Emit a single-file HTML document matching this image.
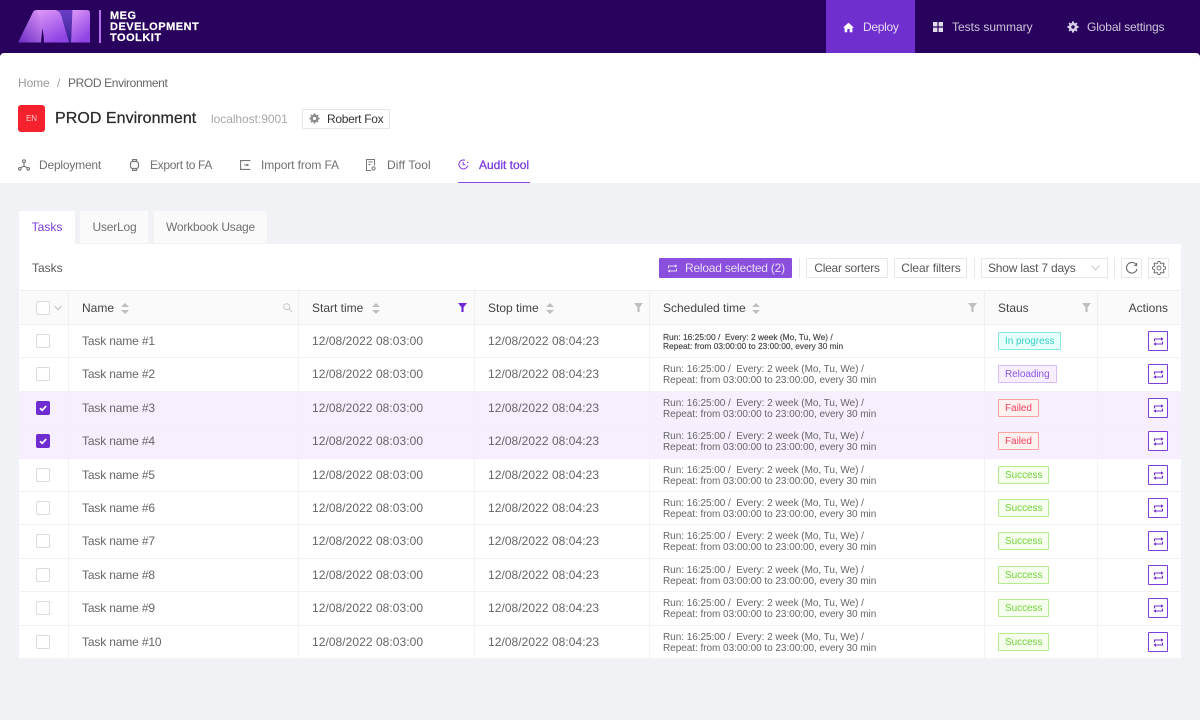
<!DOCTYPE html>
<html lang="en"><head><meta charset="utf-8"><title>MEG Development Toolkit</title>
<style>
*{box-sizing:border-box}
html,body{margin:0;padding:0}
body{width:1200px;height:720px;overflow:hidden;background:#f0f2f5;font-family:"Liberation Sans",sans-serif;position:relative;color:#595959;font-size:12px}
.a{position:absolute;white-space:nowrap}
svg{display:block}
.hdr{left:0;top:0;width:1200px;height:60px;background:#28025c}
.white{left:0;top:53px;width:1200px;height:130px;background:#fff;border-radius:4px 4px 0 0}
.nav{top:20px;font-size:12px;line-height:14px;color:#cfc6dc}
.btn{top:258px;height:20px;background:#fff;border:1px solid #e8e8e8;border-radius:1px;font-size:12px;line-height:18px;color:#595959;text-align:center}
.sep{top:258px;width:1px;height:20px;background:#e8e8e8}
table{position:absolute;left:19px;top:290px;width:1162px;border-collapse:collapse;table-layout:fixed;background:#fff;font-size:12px;color:#666}
th{height:34px;background:#fafafa;font-weight:400;text-align:left;color:#444;padding:0 0 0 13.5px;border-right:1px solid #f0f0f0;border-bottom:1px solid #f0f0f0;border-top:1px solid #f0f0f0;position:relative}
td{height:33px;padding:0 0 0 13.5px;border-right:1px solid #f2f2f2;border-bottom:1px solid #f2f2f2;white-space:nowrap;position:relative;letter-spacing:.05px}
tr.t td{height:34px;padding-bottom:1px}
td.n{letter-spacing:-.15px}
th:last-child,td:last-child{border-right:0}
tr.s td{background:#f7effe;border-color:#f5edfc}
.cb{display:block;width:14px;height:14px;margin-left:17px;border:1px solid #dcdcdc;border-radius:2px;background:#fff}
.cb.on{background:#6f2dd1;border-color:#6f2dd1}
.sch{font-size:10px;line-height:11.5px;color:#666;letter-spacing:-.04px;position:relative;top:1px}
.sch.d{color:#444;font-size:8.4px;line-height:9px;letter-spacing:0;-webkit-text-stroke:.15px #444}
.tag{display:inline-block;height:18px;line-height:17px;padding:0 6px;font-size:10px;border:1px solid;border-radius:1px;vertical-align:middle;letter-spacing:-.05px}
.ip{color:#36cfc9;background:#e6fffb;border-color:#87e8de}
.re{color:#8d56e0;background:#f7efff;border-color:#d9bcf8}
.fa{color:#f5425f;background:#fff1f0;border-color:#ffa39e}
.su{color:#73d13d;background:#f6ffed;border-color:#b7eb8f}
.act{position:absolute;right:13px;top:6px;width:20px;height:20px;border:1px solid #7d3fdc;border-radius:1px;background:#fff}
.act svg{position:absolute;left:3.5px;top:3.5px}
.fl{position:absolute;top:12px;width:9px;height:9px}
.so{display:inline-block;vertical-align:-2px;margin-left:7px}
</style></head><body>
<svg width="0" height="0" style="position:absolute"><defs>
<symbol id="rl" viewBox="0 0 11 11"><path d="M1.5 5.4V3H8.6M9.5 5.6V8H2.4" fill="none" stroke="#6f2dd1" stroke-width="1.1"/><path d="M8 1.2L10.6 3 8 4.8zM3 6.2L.4 8 3 9.8z" fill="#6f2dd1"/></symbol>
<symbol id="rw" viewBox="0 0 11 11"><path d="M1.5 5.4V3H8.6M9.5 5.6V8H2.4" fill="none" stroke="#e8dcf8" stroke-width="1"/><path d="M8 1.4L10.4 3 8 4.6zM3 6.4L.6 8 3 9.6z" fill="#e8dcf8"/></symbol>
<symbol id="gr" viewBox="0 0 14 14"><path fill-rule="evenodd" d="M6 .5H8L8.4 2.3 9.6 2.8 11.2 1.8 12.2 2.8 11.2 4.4 11.7 5.6 13.5 6V8L11.7 8.4 11.2 9.6 12.2 11.2 11.2 12.2 9.6 11.2 8.4 11.7 8 13.5H6L5.6 11.7 4.4 11.2 2.8 12.2 1.8 11.2 2.8 9.6 2.3 8.4 .5 8V6L2.3 5.6 2.8 4.4 1.8 2.8 2.8 1.8 4.4 2.8 5.6 2.3ZM7 5A2 2 0 1 0 7 9 2 2 0 1 0 7 5Z"/></symbol>
<symbol id="so" viewBox="0 0 8 11"><path d="M4 0l4 4H0zM4 11L0 7h8z" fill="#bfbfbf"/></symbol>
<symbol id="ck" viewBox="0 0 12 12"><path d="M3 6.2l2.2 2.1L9.2 4" fill="none" stroke="#fff" stroke-width="1.7"/></symbol>
</defs></svg>
<div class="a hdr"></div>
<svg class="a" style="left:0;top:0" width="100" height="50" viewBox="0 0 100 50">
<defs>
<linearGradient id="g1" x1="0" y1="1" x2=".9" y2="0"><stop offset="0" stop-color="#6a2bc4"/><stop offset="1" stop-color="#dc94f7"/></linearGradient>
<linearGradient id="g2" x1="0" y1="0" x2=".5" y2="1"><stop offset="0" stop-color="#e09af8"/><stop offset="1" stop-color="#8f44e4"/></linearGradient>
<linearGradient id="g3" x1="0" y1="0" x2="0" y2="1"><stop offset="0" stop-color="#6a3fc8"/><stop offset="1" stop-color="#3a2090"/></linearGradient>
</defs>
<path d="M18 42.5 L33 12 Q34 10 37 10 L44 10 L41 42.5 Z" fill="url(#g1)"/>
<path d="M72 10 L87 10 Q90 10 90 13 L90 42.5 L71 42.5Z" fill="url(#g2)"/>
<path d="M58 10 L72.5 10 L71 42.5 L67 42.5Z" fill="url(#g3)"/>
<path d="M37 10 L56 10 Q61 11 63 22 L69 42.5 L44 42.5 Q44 30 37 10Z" fill="url(#g2)"/>
</svg>
<div class="a" style="left:99px;top:10px;width:2px;height:33px;background:#b36cf0"></div>
<div class="a" style="left:110px;top:10.5px;font-size:11px;line-height:11.3px;font-weight:700;color:#fff;letter-spacing:.5px;-webkit-text-stroke:.2px #fff">MEG<br>DEVELOPMENT<br>TOOLKIT</div>

<div class="a" style="left:826px;top:0;width:89px;height:53px;background:#6f2fcf"></div>
<svg class="a" style="left:843px;top:22px" width="11" height="11" viewBox="0 0 11 11"><path d="M5.5 .7 L11 5.6 H9.4 V10.3 H6.7 V7 H4.3 V10.3 H1.6 V5.6 H0Z" fill="#fff"/></svg>
<div class="a nav" style="left:863px;color:#e6dcf6;letter-spacing:-.3px">Deploy</div>
<svg class="a" style="left:933px;top:22px" width="10" height="10" viewBox="0 0 10 10"><path d="M0 0h4.4v4.4H0zM5.6 0H10v4.4H5.6zM0 5.6h4.4V10H0zM5.6 5.6H10V10H5.6z" fill="#e3dcee"/></svg>
<div class="a nav" style="left:952px">Tests summary</div>
<svg class="a" style="left:1066.5px;top:21px;fill:#d8cfe6" width="12" height="12"><use href="#gr"/></svg>
<div class="a nav" style="left:1087px;letter-spacing:-.13px">Global settings</div>

<div class="a white"></div>
<div class="a" style="left:18px;top:76px;line-height:14px;color:#9a9a9a;letter-spacing:-.1px">Home</div>
<div class="a" style="left:57px;top:76px;line-height:14px;color:#9a9a9a">/</div>
<div class="a" style="left:68px;top:76px;line-height:14px;color:#666;letter-spacing:-.37px">PROD Environment</div>

<div class="a" style="left:18px;top:105px;width:27px;height:27px;background:#f5222d;border-radius:3px;color:#ffc9cc;font-size:8px;line-height:27px;text-align:center">EN</div>
<div class="a" style="left:55px;top:109px;font-size:16px;line-height:20px;color:#2b2b2b;font-weight:400;letter-spacing:.05px;-webkit-text-stroke:.25px #2b2b2b">PROD Environment</div>
<div class="a" style="left:211px;top:112px;line-height:14px;color:#a8a8a8;letter-spacing:-.05px">localhost:9001</div>
<div class="a" style="left:302px;top:109px;width:88px;height:20px;border:1px solid #e6e6e6;border-radius:1px;background:#fff"></div>
<svg class="a" style="left:308.5px;top:113px;fill:#8c8c8c" width="11" height="11"><use href="#gr"/></svg>
<div class="a" style="left:327px;top:112px;line-height:14px;color:#333;letter-spacing:-.3px">Robert Fox</div>

<svg class="a" style="left:18px;top:159px" width="12" height="12" viewBox="0 0 12 12" fill="none" stroke="#777" stroke-width="1.1"><circle cx="6" cy="2.2" r="1.4"/><circle cx="1.8" cy="9.8" r="1.3"/><circle cx="10.2" cy="9.8" r="1.3"/><path d="M6 3.6V7M6 7L2.6 8.8M6 7l3.4 1.8"/></svg>
<div class="a" style="left:39px;top:158px;line-height:14px;color:#707070;letter-spacing:-.2px">Deployment</div>
<svg class="a" style="left:129px;top:159px" width="11" height="12" viewBox="0 0 11 12" fill="none" stroke="#777" stroke-width="1.2"><rect x="1.5" y="2.5" width="8" height="7" rx="2.2"/><path d="M3.5 2.5V.5h4v2M3.5 9.5v2h4v-2"/></svg>
<div class="a" style="left:150px;top:158px;line-height:14px;color:#707070;letter-spacing:-.33px">Export to FA</div>
<svg class="a" style="left:240px;top:160px" width="11" height="10" viewBox="0 0 11 10" fill="none" stroke="#777" stroke-width="1.1"><path d="M10.4 .6H.6v8.8h9.8M4 5h5"/><path d="M6.5 3.4v3.2L9 5z" fill="#777" stroke="none"/></svg>
<div class="a" style="left:261px;top:158px;line-height:14px;color:#707070;letter-spacing:-.1px">Import from FA</div>
<svg class="a" style="left:366px;top:159px" width="10" height="12" viewBox="0 0 10 12" fill="none" stroke="#777" stroke-width="1"><path d="M5 11.5H.5V.5h8v6"/><path d="M2.5 3h4M2.5 5.5h2"/><circle cx="7.5" cy="9.5" r="1.6"/></svg>
<div class="a" style="left:387px;top:158px;line-height:14px;color:#707070;letter-spacing:.1px">Diff Tool</div>
<svg class="a" style="left:458px;top:159px" width="11" height="11" viewBox="0 0 11 11" fill="none" stroke="#8a46e6" stroke-width="1.1"><path d="M9.8 6.5A4.5 4.5 0 1 1 7 1.2"/><path d="M5.2 3v2.7h2.2M9 3.6h1.4"/></svg>
<div class="a" style="left:479px;top:158px;line-height:14px;color:#7d3be0;-webkit-text-stroke:.3px #7d3be0">Audit tool</div>
<div class="a" style="left:458px;top:181.5px;width:72px;height:1.7px;background:#8a46e6"></div>

<div class="a" style="left:19px;top:211px;width:56px;height:33px;background:#fff;color:#7d3be0;line-height:33px;text-align:center;border-radius:2px 2px 0 0">Tasks</div>
<div class="a" style="left:80px;top:211px;width:68px;height:32px;background:#fafafa;color:#707070;line-height:33px;text-align:center;border-radius:2px 2px 0 0;letter-spacing:-.2px;padding-left:1px">UserLog</div>
<div class="a" style="left:154px;top:211px;width:113px;height:32px;background:#fafafa;color:#707070;line-height:33px;text-align:center;border-radius:2px 2px 0 0;letter-spacing:-.2px">Workbook Usage</div>

<div class="a" style="left:19px;top:244px;width:1162px;height:414px;background:#fff"></div>
<div class="a" style="left:32px;top:261px;line-height:14px;color:#595959">Tasks</div>

<div class="a" style="left:659px;top:258px;width:133px;height:20px;background:#8a4fdc;border-radius:1px;color:#e8dcf8;line-height:20px;padding-left:26px;letter-spacing:-.22px">Reload selected (2)</div>
<svg class="a" style="left:667px;top:262.5px" width="11" height="11"><use href="#rw"/></svg>
<div class="a sep" style="left:799px"></div>
<div class="a btn" style="left:806px;width:82px;letter-spacing:-.25px">Clear sorters</div>
<div class="a btn" style="left:894px;width:73px;letter-spacing:-.1px;padding-left:1px">Clear filters</div>
<div class="a sep" style="left:974px"></div>
<div class="a btn" style="left:981px;width:127px;text-align:left;padding-left:6px;color:#555;letter-spacing:-.2px">Show last 7 days</div>
<svg class="a" style="left:1091px;top:265px" width="9" height="6" viewBox="0 0 9 6" fill="none" stroke="#ccc"><path d="M.5 .5L4.5 5l4-4.5"/></svg>
<div class="a sep" style="left:1114px"></div>
<div class="a btn" style="left:1121px;width:21px"></div>
<svg class="a" style="left:1125px;top:261px" width="13" height="14" viewBox="0 0 13 14" fill="none" stroke="#666" stroke-width="1.1"><path d="M11.5 4.2A5.3 5.3 0 1 0 12 8"/><path d="M11.6 2v2.5H9.2"/></svg>
<div class="a btn" style="left:1148px;width:21px"></div>
<svg class="a" style="left:1152px;top:261px;fill:none;stroke:#6a6a6a;stroke-width:.9" width="14" height="14"><use href="#gr"/></svg>

<table>
<colgroup><col style="width:49px"><col style="width:230px"><col style="width:176px"><col style="width:175px"><col style="width:335px"><col style="width:113px"><col style="width:84px"></colgroup>
<thead><tr>
<th style="padding:0"><span class="cb"></span><svg style="position:absolute;left:35px;top:14px" width="8" height="6" viewBox="0 0 8 6" fill="none" stroke="#bbb"><path d="M.5 1L4 4.5 7.5 1"/></svg></th>
<th>Name<svg class="so" width="8" height="11"><use href="#so"/></svg><svg class="fl" style="right:6px" viewBox="0 0 9 9" fill="none" stroke="#c4c4c4"><circle cx="3.7" cy="3.7" r="3"/><path d="M6 6l2.7 2.7"/></svg></th>
<th>Start time<svg class="so" style="margin-left:8.5px" width="8" height="11"><use href="#so"/></svg><svg class="fl" style="right:7px" viewBox="0 0 9 9" fill="#6f2dd1"><path d="M0 0h9L5.6 4.4V9H3.4V4.4z"/></svg></th>
<th>Stop time<svg class="so" width="8" height="11"><use href="#so"/></svg><svg class="fl" style="right:6px" viewBox="0 0 9 9" fill="#bfbfbf"><path d="M0 0h9L5.6 4.4V9H3.4V4.4z"/></svg></th>
<th>Scheduled time<svg class="so" style="margin-left:6px" width="8" height="11"><use href="#so"/></svg><svg class="fl" style="right:7px" viewBox="0 0 9 9" fill="#bfbfbf"><path d="M0 0h9L5.6 4.4V9H3.4V4.4z"/></svg></th>
<th>Staus<svg class="fl" style="right:6px" viewBox="0 0 9 9" fill="#bfbfbf"><path d="M0 0h9L5.6 4.4V9H3.4V4.4z"/></svg></th>
<th style="text-align:right;padding:0 13px 0 0">Actions</th>
</tr></thead>
<tbody>
<tr><td style="padding:0"><span class="cb"></span></td><td class="n">Task name #1</td><td>12/08/2022 08:03:00</td><td>12/08/2022 08:04:23</td><td><div class="sch d">Run: 16:25:00 / &nbsp;Every: 2 week (Mo, Tu, We) /<br>Repeat: from 03:00:00 to 23:00:00, every 30 min</div></td><td><span class="tag ip">In progress</span></td><td><span class="act"><svg width="11" height="11"><use href="#rl"/></svg></span></td></tr>
<tr class="t"><td style="padding:0 0 1px"><span class="cb"></span></td><td class="n">Task name #2</td><td>12/08/2022 08:03:00</td><td>12/08/2022 08:04:23</td><td><div class="sch">Run: 16:25:00 / &nbsp;Every: 2 week (Mo, Tu, We) /<br>Repeat: from 03:00:00 to 23:00:00, every 30 min</div></td><td><span class="tag re">Reloading</span></td><td><span class="act"><svg width="11" height="11"><use href="#rl"/></svg></span></td></tr>
<tr class="s"><td style="padding:0"><span class="cb on"><svg width="12" height="12"><use href="#ck"/></svg></span></td><td class="n">Task name #3</td><td>12/08/2022 08:03:00</td><td>12/08/2022 08:04:23</td><td><div class="sch">Run: 16:25:00 / &nbsp;Every: 2 week (Mo, Tu, We) /<br>Repeat: from 03:00:00 to 23:00:00, every 30 min</div></td><td><span class="tag fa">Failed</span></td><td><span class="act"><svg width="11" height="11"><use href="#rl"/></svg></span></td></tr>
<tr class="s t"><td style="padding:0 0 1px"><span class="cb on"><svg width="12" height="12"><use href="#ck"/></svg></span></td><td class="n">Task name #4</td><td>12/08/2022 08:03:00</td><td>12/08/2022 08:04:23</td><td><div class="sch">Run: 16:25:00 / &nbsp;Every: 2 week (Mo, Tu, We) /<br>Repeat: from 03:00:00 to 23:00:00, every 30 min</div></td><td><span class="tag fa">Failed</span></td><td><span class="act"><svg width="11" height="11"><use href="#rl"/></svg></span></td></tr>
<tr><td style="padding:0"><span class="cb"></span></td><td class="n">Task name #5</td><td>12/08/2022 08:03:00</td><td>12/08/2022 08:04:23</td><td><div class="sch">Run: 16:25:00 / &nbsp;Every: 2 week (Mo, Tu, We) /<br>Repeat: from 03:00:00 to 23:00:00, every 30 min</div></td><td><span class="tag su">Success</span></td><td><span class="act"><svg width="11" height="11"><use href="#rl"/></svg></span></td></tr>
<tr><td style="padding:0"><span class="cb"></span></td><td class="n">Task name #6</td><td>12/08/2022 08:03:00</td><td>12/08/2022 08:04:23</td><td><div class="sch">Run: 16:25:00 / &nbsp;Every: 2 week (Mo, Tu, We) /<br>Repeat: from 03:00:00 to 23:00:00, every 30 min</div></td><td><span class="tag su">Success</span></td><td><span class="act"><svg width="11" height="11"><use href="#rl"/></svg></span></td></tr>
<tr class="t"><td style="padding:0 0 1px"><span class="cb"></span></td><td class="n">Task name #7</td><td>12/08/2022 08:03:00</td><td>12/08/2022 08:04:23</td><td><div class="sch">Run: 16:25:00 / &nbsp;Every: 2 week (Mo, Tu, We) /<br>Repeat: from 03:00:00 to 23:00:00, every 30 min</div></td><td><span class="tag su">Success</span></td><td><span class="act"><svg width="11" height="11"><use href="#rl"/></svg></span></td></tr>
<tr><td style="padding:0"><span class="cb"></span></td><td class="n">Task name #8</td><td>12/08/2022 08:03:00</td><td>12/08/2022 08:04:23</td><td><div class="sch">Run: 16:25:00 / &nbsp;Every: 2 week (Mo, Tu, We) /<br>Repeat: from 03:00:00 to 23:00:00, every 30 min</div></td><td><span class="tag su">Success</span></td><td><span class="act"><svg width="11" height="11"><use href="#rl"/></svg></span></td></tr>
<tr class="t"><td style="padding:0 0 1px"><span class="cb"></span></td><td class="n">Task name #9</td><td>12/08/2022 08:03:00</td><td>12/08/2022 08:04:23</td><td><div class="sch">Run: 16:25:00 / &nbsp;Every: 2 week (Mo, Tu, We) /<br>Repeat: from 03:00:00 to 23:00:00, every 30 min</div></td><td><span class="tag su">Success</span></td><td><span class="act"><svg width="11" height="11"><use href="#rl"/></svg></span></td></tr>
<tr><td style="padding:0"><span class="cb"></span></td><td class="n">Task name #10</td><td>12/08/2022 08:03:00</td><td>12/08/2022 08:04:23</td><td><div class="sch">Run: 16:25:00 / &nbsp;Every: 2 week (Mo, Tu, We) /<br>Repeat: from 03:00:00 to 23:00:00, every 30 min</div></td><td><span class="tag su">Success</span></td><td><span class="act"><svg width="11" height="11"><use href="#rl"/></svg></span></td></tr>
</tbody></table>
</body></html>
